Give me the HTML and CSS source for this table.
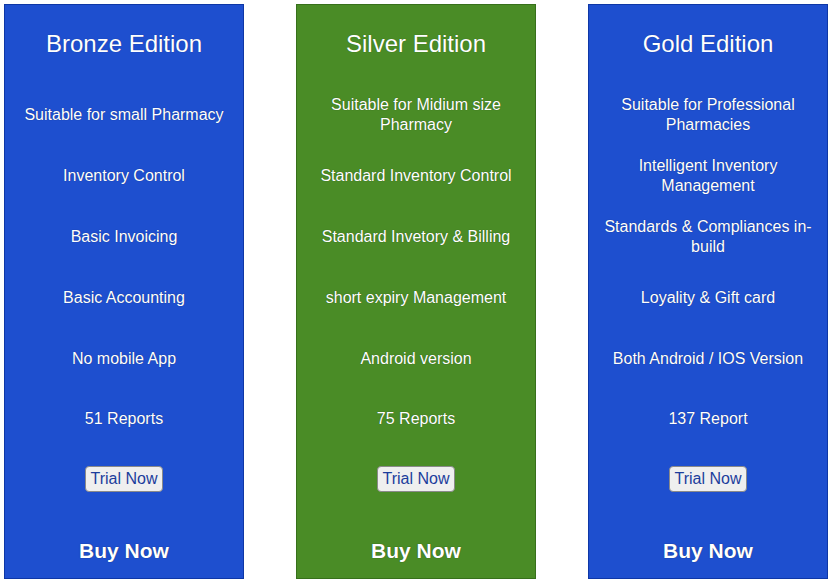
FILE: index.html
```html
<!DOCTYPE html>
<html>
<head>
<meta charset="utf-8">
<link rel="stylesheet" href="styles.css">
</head>
<body>
<div class="plans">
  <div class="plan blue">
    <div class="title">Bronze Edition</div>
    <div class="feat">Suitable for small Pharmacy</div>
    <div class="feat">Inventory Control</div>
    <div class="feat">Basic Invoicing</div>
    <div class="feat">Basic Accounting</div>
    <div class="feat">No mobile App</div>
    <div class="feat">51 Reports</div>
    <div class="feat"><button class="trial">Trial Now</button></div>
    <div class="buy">Buy Now</div>
  </div>
  <div class="plan green">
    <div class="title">Silver Edition</div>
    <div class="feat">Suitable for Midium size Pharmacy</div>
    <div class="feat">Standard Inventory Control</div>
    <div class="feat">Standard Invetory &amp; Billing</div>
    <div class="feat">short expiry Management</div>
    <div class="feat">Android version</div>
    <div class="feat">75 Reports</div>
    <div class="feat"><button class="trial">Trial Now</button></div>
    <div class="buy">Buy Now</div>
  </div>
  <div class="plan blue">
    <div class="title">Gold Edition</div>
    <div class="feat">Suitable for Professional Pharmacies</div>
    <div class="feat">Intelligent Inventory Management</div>
    <div class="feat">Standards &amp; Compliances in-build</div>
    <div class="feat">Loyality &amp; Gift card</div>
    <div class="feat">Both Android / IOS Version</div>
    <div class="feat">137 Report</div>
    <div class="feat"><button class="trial">Trial Now</button></div>
    <div class="buy">Buy Now</div>
  </div>
</div>
</body>
</html>
```
FILE: styles.css
```css
html, body {
  margin: 0;
  padding: 0;
  background: #ffffff;
}
body {
  font-family: "Liberation Sans", Arial, sans-serif;
  color: #ffffff;
}
.plans {
  display: flex;
  gap: 52px;
  padding: 4px 0 0 4px;
}
.plan {
  width: 240px;
  height: 575px;
  box-sizing: border-box;
  display: flex;
  flex-direction: column;
  text-align: center;
}
.blue {
  background: #1e4fcf;
  border: 1px solid #0e37a6;
}
.green {
  background: #4a8c26;
  border: 1px solid #37701b;
}
.title {
  height: 80px;
  box-sizing: border-box;
  padding-bottom: 2px;
  display: flex;
  align-items: center;
  justify-content: center;
  font-size: 24px;
  text-shadow: 0 0 1px rgba(0, 0, 0, 0.35);
}
.feat {
  height: 60.8px;
  display: flex;
  align-items: center;
  justify-content: center;
  padding: 0 8px;
  font-size: 16px;
  line-height: 20px;
  text-shadow: 0 0 1px rgba(0, 0, 0, 0.45);
}
.trial {
  font-family: "Liberation Sans", Arial, sans-serif;
  font-size: 16px;
  line-height: 18px;
  padding: 3px 5px;
  margin-top: -2px;
  background: #efefef;
  color: #1c3d9c;
  border: 1px solid #8a8a8a;
  border-radius: 4px;
}
.buy {
  flex: 1;
  display: flex;
  align-items: center;
  justify-content: center;
  padding-top: 14px;
  font-size: 21px;
  font-weight: bold;
  text-shadow: 0 0 1px rgba(0, 0, 0, 0.6);
}
```
